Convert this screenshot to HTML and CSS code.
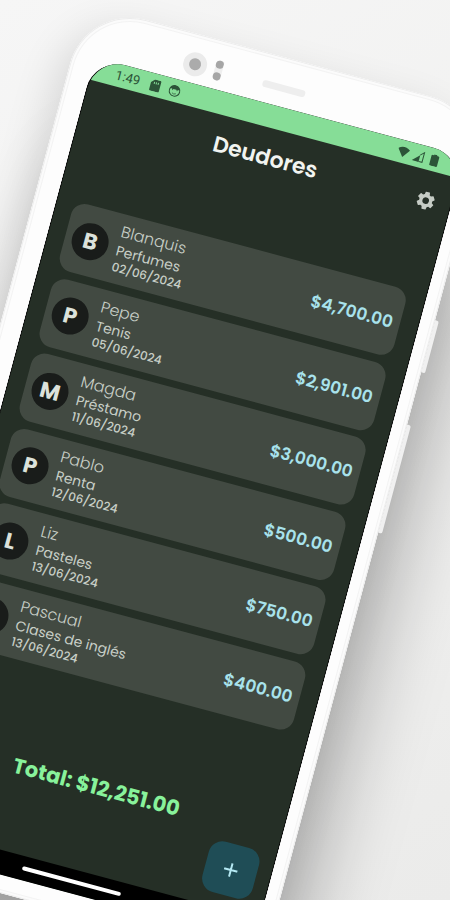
FILE: index.html
```html
<!DOCTYPE html>
<html lang="es">
<head>
    <meta charset="UTF-8">
    <meta name="viewport" content="width=device-width, initial-scale=1.0">
    <title>Deudores</title>
    <link rel="stylesheet" href="styles.css">
</head>
<body>

    <div class="phone">
        <span class="side-button power"></span>
        <span class="side-button volume"></span>

        <!-- Cámara, sensores y bocina -->
        <div class="phone-top">
            <svg class="sensors" viewBox="0 0 40 26" aria-hidden="true">
                <circle cx="12" cy="13" r="12" fill="#ebebeb"/>
                <circle cx="12" cy="13" r="6" fill="#ababab"/>
                <rect x="32" y="3" width="9" height="20" rx="4" fill="#eeeeee"/>
                <circle cx="36" cy="7" r="4" fill="#a6a6a6"/>
                <circle cx="36" cy="19" r="4" fill="#a6a6a6"/>
            </svg>
            <span class="speaker"></span>
        </div>

        <div class="screen">
            <div class="status-bar">
                <span class="clock">1:49</span>
                <svg class="status-icon" viewBox="0 0 12 12" aria-hidden="true">
                    <path fill-rule="evenodd" d="M4.5 0H10a1 1 0 0 1 1 1v10a1 1 0 0 1-1 1H2a1 1 0 0 1-1-1V3.500ZM4 2.500v2h1v-2Zm2 0v2h1v-2Zm2 0v2h1v-2Z"/>
                </svg>
                <svg class="status-icon" viewBox="0 0 12 12" aria-hidden="true">
                    <circle cx="6" cy="6" r="5.300" fill="none" stroke="currentColor" stroke-width="1"/>
                    <path d="M1 4.500C2 1.500 4 .7 6 .7s4 .8 5 3.800L9 4.200 8.500 6 7.500 4.500h-3L3.500 6 3 4.200Z"/>
                    <path d="M4 8.500q2 1.500 4 0" fill="none" stroke="currentColor" stroke-width=".7"/>
                </svg>
                <span class="spacer"></span>
                <svg class="status-icon" viewBox="0 0 12 12" aria-hidden="true">
                    <path d="M0 3Q6-1.500 12 3L6 11Z"/>
                </svg>
                <svg class="status-icon" viewBox="0 0 12 12" aria-hidden="true">
                    <path d="M0 11.500 7 4.500v7Z"/>
                    <path d="M7 4.500 10.500 1v10H7" fill="none" stroke="currentColor" stroke-width="1"/>
                </svg>
                <svg class="status-icon" viewBox="0 0 12 12" aria-hidden="true">
                    <path d="M4.500 0h3v1H9a1 1 0 0 1 1 1v9a1 1 0 0 1-1 1H3a1 1 0 0 1-1-1V2a1 1 0 0 1 1-1h1.500Z"/>
                </svg>
            </div>

            <main class="app">
                <header class="app-bar">
                    <h1>Deudores</h1>
                    <button class="settings" type="button" aria-label="Ajustes">
                        <svg viewBox="0 0 24 24" aria-hidden="true">
                            <path d="M19.140 12.940c.04-.3.060-.61.060-.94s-.02-.64-.07-.94l2.030-1.580a.49.490 0 0 0 .12-.61l-1.920-3.320a.488.488 0 0 0-.59-.22l-2.390.96a7.030 7.030 0 0 0-1.620-.94l-.36-2.540a.484.484 0 0 0-.48-.41h-3.840c-.24 0-.43.17-.47.41l-.36 2.540c-.59.24-1.130.57-1.620.94l-2.390-.96a.48.480 0 0 0-.59.22L2.740 8.870c-.12.21-.08.47.12.61l2.030 1.580c-.05.3-.09.63-.09.94s.02.64.07.94l-2.030 1.580a.49.490 0 0 0-.12.61l1.920 3.320c.12.22.37.29.59.22l2.390-.96c.5.38 1.030.7 1.620.94l.36 2.540c.05.24.24.41.48.41h3.840c.24 0 .44-.17.47-.41l.36-2.540c.59-.24 1.130-.56 1.620-.94l2.390.96c.22.08.47 0 .59-.22l1.920-3.320a.48.480 0 0 0-.12-.61zM12 15.600a3.600 3.600 0 1 1 0-7.200 3.600 3.600 0 0 1 0 7.200z"/>
                        </svg>
                    </button>
                </header>

                <ul class="debtors">
                    <li class="card">
                        <span class="avatar">B</span>
                        <div class="info">
                            <p class="name">Blanquis</p>
                            <p class="concept">Perfumes</p>
                            <p class="date">02/06/2024</p>
                        </div>
                        <span class="amount">$4,700.00</span>
                    </li>
                    <li class="card">
                        <span class="avatar">P</span>
                        <div class="info">
                            <p class="name">Pepe</p>
                            <p class="concept">Tenis</p>
                            <p class="date">05/06/2024</p>
                        </div>
                        <span class="amount">$2,901.00</span>
                    </li>
                    <li class="card">
                        <span class="avatar">M</span>
                        <div class="info">
                            <p class="name">Magda</p>
                            <p class="concept">Préstamo</p>
                            <p class="date">11/06/2024</p>
                        </div>
                        <span class="amount">$3,000.00</span>
                    </li>
                    <li class="card">
                        <span class="avatar">P</span>
                        <div class="info">
                            <p class="name">Pablo</p>
                            <p class="concept">Renta</p>
                            <p class="date">12/06/2024</p>
                        </div>
                        <span class="amount">$500.00</span>
                    </li>
                    <li class="card">
                        <span class="avatar">L</span>
                        <div class="info">
                            <p class="name">Liz</p>
                            <p class="concept">Pasteles</p>
                            <p class="date">13/06/2024</p>
                        </div>
                        <span class="amount">$750.00</span>
                    </li>
                    <li class="card">
                        <span class="avatar">P</span>
                        <div class="info">
                            <p class="name">Pascual</p>
                            <p class="concept">Clases de inglés</p>
                            <p class="date">13/06/2024</p>
                        </div>
                        <span class="amount">$400.00</span>
                    </li>
                </ul>

                <p class="total">Total: $12,251.00</p>

                <button class="add-button" type="button" aria-label="Agregar deudor">
                    <svg viewBox="0 0 14 14" aria-hidden="true">
                        <path d="M7 0v14M0 7h14"/>
                    </svg>
                </button>
            </main>

            <div class="nav-bar"><span class="home-pill"></span></div>
        </div>
    </div>

</body>
</html>
```
FILE: styles.css
```css
* {
    box-sizing: border-box;
}

body {
    margin: 0;
    min-height: 100vh;
    overflow: hidden;
    display: flow-root;
    font-family: Poppins, Inter, "Open Sans", sans-serif;
    background: linear-gradient(150deg, #f6f6f6 0%, #f1f1f0 45%, #ebebea 100%);
}

h1,
p,
ul {
    margin: 0;
    padding: 0;
}

button {
    border: none;
    padding: 0;
    cursor: pointer;
}

/* Teléfono inclinado */
.phone {
    position: relative;
    width: 93vw;
    margin: 4px 0 0 86px;
    padding: 0 14px 18px 22px;
    border-radius: 62px;
    background-color: #fdfdfd;
    transform: rotate(15deg);
    transform-origin: top left;
    box-shadow:
        inset 0 0 0 1px #ececec,
        inset 0 0 0 3px #fbfbfb,
        inset 0 0 0 4px #f3f3f3,
        -8px 14px 40px rgba(0, 0, 0, 0.12),
        30px 130px 70px rgba(0, 0, 0, 0.25);
}

.side-button {
    position: absolute;
    left: 100%;
    width: 4px;
    border-radius: 0 2px 2px 0;
    background-color: #f0f0f0;
}

.power {
    top: 215px;
    height: 54px;
}

.volume {
    top: 323px;
    height: 112px;
}

.phone-top {
    display: grid;
    grid-template-columns: 1fr 44px 1fr;
    align-items: center;
    height: 49px;
    padding-top: 11px;
}

.sensors {
    justify-self: end;
    width: 40px;
    height: 26px;
    margin-right: 42px;
}

.speaker {
    height: 7px;
    border-radius: 3px;
    background-color: #eeeeee;
}

.screen {
    overflow: hidden;
    border: solid #000;
    border-width: 0 1px;
    border-radius: 32px 32px 24px 24px;
    background-color: #252f26;
}

/* Barra de estado */
.status-bar {
    display: flex;
    align-items: center;
    gap: 4px;
    height: 23px;
    padding: 0 21px 0 24px;
    color: #2c5438;
    background-color: #86dd97;
}

.clock {
    width: 27px;
    font: 13px/20px Roboto, sans-serif;
}

.status-icon {
    width: 12px;
    height: 12px;
    margin-left: 4px;
    fill: currentColor;
}

.spacer {
    flex: 1;
}

.status-icon:nth-last-child(-n+2) {
    margin-left: 0;
}

.app {
    position: relative;
    padding: 0 18px 70px 17px;
}

.app-bar {
    display: grid;
    grid-template-columns: 1fr auto 1fr;
    align-items: center;
    height: 60px;
}

.app-bar h1 {
    grid-column: 2;
    font-size: 22px;
    line-height: 30px;
    font-weight: 600;
    color: #f1f4f0;
}

.settings {
    justify-self: end;
    width: 22px;
    height: 22px;
    margin-right: -4px;
    background: none;
}

.settings svg {
    display: block;
    fill: #c6ccc5;
}

/* Lista de deudores */
.debtors {
    display: flex;
    flex-direction: column;
    justify-content: space-between;
    min-height: 458px;
    margin-top: 61px;
    list-style: none;
}

.card {
    display: flex;
    align-items: center;
    height: 70px;
    padding: 0 7px;
    border-radius: 14px;
    background-color: #424a42;
}

.avatar {
    width: 37px;
    height: 37px;
    margin-right: 9px;
    border-radius: 50%;
    font-size: 22px;
    line-height: 38px;
    font-weight: 700;
    text-align: center;
    color: #dce2db;
    background-color: #191c1a;
}

.info {
    flex: 1;
    color: #c8cfc7;
}

.name {
    font-size: 16px;
    line-height: 20px;
    font-weight: 300;
}

.concept {
    font-size: 14px;
    line-height: 18px;
    font-weight: 400;
}

.date {
    font-size: 12px;
    line-height: 16px;
    font-weight: 500;
}

.amount {
    font-size: 17px;
    line-height: 20px;
    font-weight: 600;
    color: #a8e2ec;
}

.total {
    margin-top: 88px;
    font-size: 21px;
    line-height: 30px;
    font-weight: 700;
    text-align: center;
    color: #88f29b;
}

.add-button {
    position: absolute;
    right: 14px;
    bottom: 14px;
    display: grid;
    place-items: center;
    width: 52px;
    height: 52px;
    border-radius: 14px;
    background-color: #1f4d56;
}

.add-button svg {
    width: 14px;
    height: 14px;
    fill: none;
    stroke: #b4e8f2;
    stroke-width: 2;
}

/* Barra de navegación */
.nav-bar {
    display: flex;
    justify-content: center;
    align-items: center;
    height: 24px;
    background-color: #000;
}

.home-pill {
    width: 102px;
    height: 4px;
    border-radius: 2px;
    background-color: #fff;
}
```
